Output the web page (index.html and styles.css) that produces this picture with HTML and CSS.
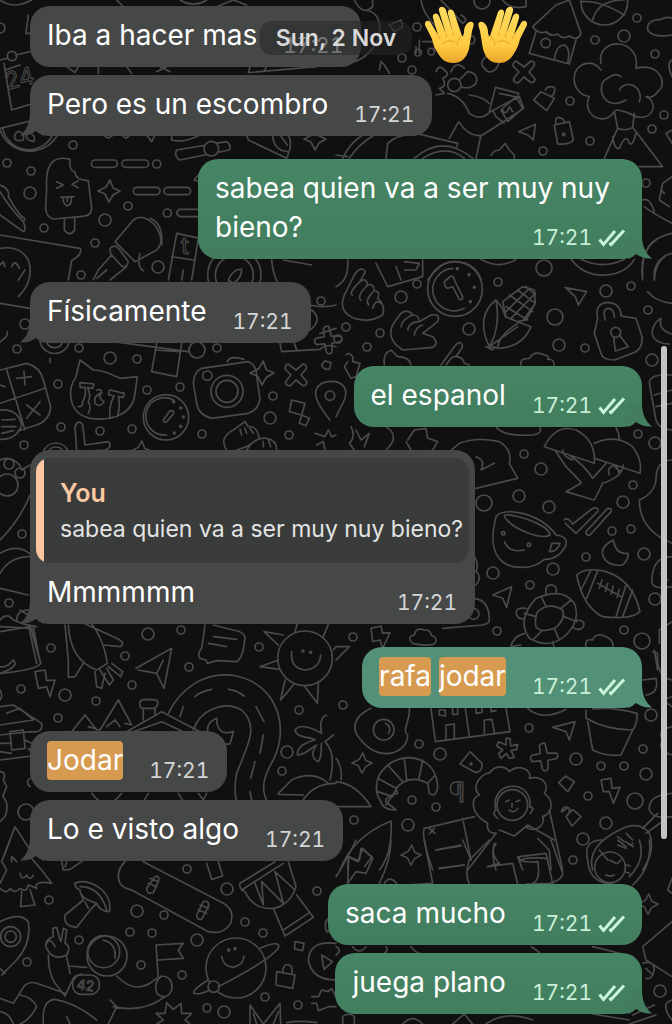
FILE: index.html
```html
<!DOCTYPE html>
<html lang="es">
<head>
  <meta charset="UTF-8" />
  <meta name="viewport" content="width=device-width, initial-scale=1.0" />
  <title>Chat</title>
  <link rel="stylesheet" href="styles.css">
</head>
<body>
  <svg width="0" height="0" class="defs" aria-hidden="true">
    <symbol id="tail-in" viewBox="0 0 24 24"><path d="M24 0H10C10 10 7 18 0 23.5C7 24 12 22 16 19Q20 23 24 24Z"/></symbol>
    <symbol id="tail-out" viewBox="0 0 24 24"><path d="M0 0H14C14 10 17 18 24 23.5C17 24 12 22 8 19Q4 23 0 24Z"/></symbol>
    <symbol id="checks" viewBox="0 0 28 18"><path d="M1.5 10.5L5.5 15.5L17 2M11.5 14L13 15.5L26 1.5"/></symbol>
    <symbol id="star" viewBox="-12 -12 24 24" overflow="visible"><path d="M1-11L4-3L11 0L4 4L0 11L-4 3L-11 0L-3-4Z"/></symbol>
    <symbol id="cross" viewBox="-12 -12 24 24" overflow="visible"><path d="M-8-11L0-5L7-11Q12-10 10-6L5 0L11 7Q10 12 6 10L0 5L-6 11Q-12 10-10 6L-5 0L-11-6Q-11-10-8-11Z"/></symbol>
    <symbol id="hand" viewBox="0 0 50 58">
      <path fill="url(#skin)" d="M14 49C10 43 8 38 7 33L0 19C-1 15 4 13 6 17L13 29L8 12C7 7 12 6 14 10L21 28L14 5C13 0 19-1 21 4L28 27L23 8C22 3 27 2 29 6L37 30C38 31 39 28 39 26C39 20 43 15 47 16C50 17 48 21 47 25L44 43C41 53 36 57 28 57C22 57 17 54 14 49Z"/>
      <path fill="none" stroke="#e4a52d" stroke-width="1" d="M13 29L15 33M21 28L22 31M28 27L29 30M37 30Q32 33 32 40M17 38Q24 33 30 36"/>
    </symbol>
    <linearGradient id="skin" x2="0" y2="1">
      <stop offset="0" stop-color="#ffdc62"/>
      <stop offset=".7" stop-color="#ffca3f"/>
      <stop offset="1" stop-color="#eaa52c"/>
    </linearGradient>
  </svg>

  <div class="chat">
    <svg class="wallpaper" viewBox="0 0 672 1024" preserveAspectRatio="xMidYMin slice" aria-hidden="true">
      <g id="rings"></g>

      <!-- sparkles and crosses -->
      <use href="#star" x="97" y="179" width="24" height="24"/>
      <use href="#star" x="249" y="359" width="26" height="28"/>
      <use href="#star" x="303" y="127" width="24" height="24"/>
      <use href="#star" x="351" y="752" width="22" height="22"/>
      <use href="#star" x="400" y="844" width="22" height="22"/>
      <use href="#star" x="637" y="893" width="22" height="22"/>
      <use href="#star" x="130" y="440" width="22" height="22"/>
      <use href="#cross" x="512" y="60" width="24" height="24"/>
      <use href="#cross" x="284" y="363" width="24" height="24"/>
      <g transform="translate(544 757) rotate(40)"><use href="#cross" x="-12" y="-12" width="24" height="24"/></g>
      <g transform="translate(328 340) rotate(40)"><use href="#cross" x="-12" y="-12" width="24" height="24"/></g>

      <!-- calendar, citrus, ice cream, pen -->
      <g class="wide">
        <path d="M0 0Q40 30 95 0M85 45L78 100H95M0 180L25 174M48 165L90 155M12 190L35 330L100 310M15 210L60 195M0 385L165 345M0 390A95 95 0 0 0 175 400M8 385A80 80 0 0 0 160 400M45 405C50 385 75 395 70 420C50 425 40 420 45 405M80 405C95 390 110 415 100 425C80 420 78 415 80 405"/>
        <circle cx="36" cy="168" r="14"/>
        <path d="M200 200L225 218L235 200M295 200V220M350 0L370 20M380 200L395 220M470 215L500 200M480 200L510 215M750 200L745 218L950 200M790 215L800 200M310 405L325 415L340 405M365 405L378 415L390 405M440 405L455 425L465 405M515 405V420Q550 430 600 405M540 0Q580 25 620 0M650 20L700 0L740 15"/>
        <path d="M530 450L680 425Q695 435 688 450L540 480Q520 470 530 450M740 405L745 420L860 475Q880 430 865 405M818 405Q820 450 862 455M840 405L862 435"/>
        <circle cx="634" cy="446" r="22" fill="#101010"/>
        <path d="M140 560C135 470 180 470 210 478Q205 510 225 517Q225 540 265 542L275 625Q275 650 240 650L160 657Q138 650 137 625ZM193 657V690Q210 712 224 690V654M170 545L190 555L170 565M235 542L216 553L235 563M182 592L222 590M190 592V605Q203 630 214 605V591M202 594V605"/>
        <rect x="274" y="480" width="78" height="22" rx="11"/><rect x="366" y="480" width="80" height="22" rx="11"/><circle cx="470" cy="492" r="12"/>
        <rect x="400" y="562" width="80" height="22" rx="11"/><rect x="492" y="562" width="80" height="22" rx="11"/><path d="M600 628H540Q520 638 540 650H600M600 520L582 540L600 545"/><circle cx="502" cy="639" r="12"/>
        <path d="M0 555Q30 565 25 590Q40 620 65 650Q80 655 70 665Q80 690 70 695L0 645M0 575Q30 625 70 665M0 705L240 745Q250 760 215 782L205 840M0 745Q60 735 85 780Q105 840 55 890M0 795L10 785L15 800M35 800Q45 775 58 805M55 840L75 810"/>
        <path d="M345 725L400 660Q425 640 460 670Q500 720 470 750L405 785ZM450 655Q490 670 485 735M330 745Q345 730 358 748L385 785Q380 805 365 798L332 762ZM335 765L295 810L280 840M380 800L330 840M290 835L320 810M420 760Q410 800 430 812"/>
        <path d="M530 700L600 715M530 700L505 840M515 770L580 780M595 715L575 840M545 840L550 810"/>
        <circle cx="703" cy="825" r="80"/><circle cx="703" cy="825" r="57"/><path d="M685 840Q700 805 725 808Q725 835 700 850ZM815 780Q820 850 870 900Q960 930 1008 915M850 780L935 795"/>
      </g>
      <text x="7" y="90" class="num" transform="rotate(-14 7 90)">24</text>
      <text x="181" y="254" class="num">t</text>

      <!-- shop, tree, candle, volcano -->
      <g class="wide" transform="translate(336 0)">
        <path d="M255 0Q260 40 300 80M315 0L380 70Q400 60 375 45M55 0Q80 50 110 20V0M0 190Q90 200 130 110Q140 30 80 30M160 75L195 60L200 80L175 95ZM130 210L135 185Q145 190 160 220M240 160V140M250 120V160M260 125H295V155"/>
        <circle cx="246" cy="158" r="10"/><circle cx="286" cy="155" r="10"/>
        <path d="M590 80L660 15L700 0L735 100Q725 125 700 108Q680 120 665 102Q645 112 630 95Q610 105 590 80M600 95L580 160L700 192L720 120M655 180Q660 135 685 135Q705 145 695 190"/><circle cx="629" cy="129" r="14"/>
        <circle cx="805" cy="5" r="70"/><path d="M740 5Q790 0 865 45M770 60Q785 0 865 0M1008 55Q995 48 975 58Q930 60 935 90Q950 115 1008 105M1008 180Q990 190 1008 230M1008 390L990 400L1008 430"/>
        <path d="M795 190C780 110 915 110 900 205C965 185 1000 250 965 275C950 300 920 290 935 290C970 320 945 360 900 350Q870 335 865 335Q840 325 835 335C800 385 735 340 760 290C700 280 700 195 755 190Q775 185 795 210M870 300C800 340 775 250 815 235Q840 215 855 230M850 270C870 235 925 260 910 305M835 335L845 385Q870 395 890 382L895 340M845 385L805 475M890 382L980 500L910 500M830 410Q835 450 850 445Q870 395 880 430Q890 440 900 400"/>
        <path d="M440 200Q430 175 465 165L490 185Q480 220 455 215ZM500 0Q520 30 570 20V0"/>
        <path d="M345 215Q360 180 385 205M300 215Q310 190 325 210Q345 225 320 235Q335 260 310 265L325 280L300 285M370 240L395 215Q430 220 420 250Q400 270 375 260M335 280Q380 290 400 340Q430 360 450 345Q470 330 550 290L563 325L440 405Q400 415 368 365L340 415M400 285Q440 290 460 310M460 335L478 262L548 280L545 292L490 280M470 330L480 350L505 370M495 330L540 290L560 325L515 365ZM500 330Q510 350 520 320L530 335M435 405L420 475"/><circle cx="355" cy="255" r="20"/>
        <path d="M593 300L615 275L655 295L632 332ZM628 270Q635 255 655 262Q660 280 645 290M655 375L700 365L712 420Q700 435 665 432ZM660 372Q655 345 675 355Q688 360 685 370M548 395L598 373L592 420L575 405Z"/><circle cx="683" cy="403" r="4"/>
        <path d="M465 465Q475 450 490 450L508 430L520 450L535 465L535 475M240 400L365 430L362 440M150 475L155 430Q180 405 240 400M235 475Q320 400 410 475M260 475Q330 430 385 475M20 475Q40 430 80 405M40 475Q70 430 115 405M0 465L35 470"/>
        <path d="M920 600Q940 590 955 635M925 620Q950 640 1008 670M1008 530L980 550L970 600L1000 620M975 570L985 580"/>
        <path d="M920 840Q905 720 1008 700M955 840Q960 770 1008 760"/>
        <path d="M705 778Q745 830 810 825Q870 820 895 778M735 778Q800 810 865 778M120 790L155 860L260 830V780M180 800L195 840M205 785L250 790L240 810H205M275 840Q320 780 360 785Q420 790 435 840M0 860Q40 840 35 780M435 778Q490 810 540 778"/>
      </g>

      <!-- cat, stopwatch, camera, pin -->
      <g class="wide" transform="translate(0 270)">
        <path d="M0 100L90 115M0 215Q25 200 22 185M120 215A45 45 0 0 0 208 215M140 215A25 25 0 0 0 188 215M150 265V278M340 215L565 245M470 220L455 305L530 320L545 220M465 240L540 245M935 120Q970 150 930 180M840 220L845 245L960 238Q980 220 1008 230M880 210L890 240M1008 175L960 190"/>
        <path d="M240 270L228 320C200 360 205 430 270 445C340 455 400 430 405 370L412 320L360 325Q310 300 280 300ZM242 338L282 342L278 355L262 353Q275 375 265 395Q275 410 265 430M240 338V352L255 352Q260 375 248 395Q250 410 235 410M330 360L373 370L370 382L355 380Q362 405 352 440M328 360L326 374L342 378Q325 410 330 445M290 360Q305 355 305 368Q290 380 312 395Q300 415 285 400Q280 380 300 370"/>
        <circle cx="498" cy="442" r="68"/><path d="M520 390A56 56 0 1 0 500 495M490 450L510 422Q525 420 520 432L500 455Q490 460 490 450"/><circle cx="521" cy="395" r="3"/><circle cx="542" cy="414" r="3"/><circle cx="550" cy="441" r="3"/><circle cx="542" cy="469" r="3"/><circle cx="523" cy="489" r="3"/>
        <path d="M605 295L745 275Q770 285 770 320L780 385Q775 420 745 430L635 445Q595 435 590 400L580 340Q582 305 605 295M682 275Q690 255 732 268"/><circle cx="681" cy="364" r="48"/><circle cx="681" cy="364" r="33"/><circle cx="622" cy="317" r="14"/>
        <path d="M0 300L80 280Q120 290 130 330L152 410Q150 450 110 465L55 482M20 300L75 480M0 400L135 355M50 325L95 320M72 303L75 345M80 405L120 435M120 395L80 445M0 345L15 350M0 420Q55 415 65 465Q50 510 0 508M5 450L45 448M5 470H48M5 490L40 482"/>
        <path d="M130 545A40 40 0 0 1 205 545M145 545A25 25 0 0 1 190 545M225 470Q235 445 248 465L255 525L325 515Q340 530 315 540L230 545Z"/>
        <path d="M680 540Q655 505 700 480L735 455L745 470Q770 465 778 505L740 530L710 540M740 540Q765 500 800 505Q830 510 830 540M735 475L740 490M720 478L725 495M750 475L760 490M790 515V530M805 510L812 530"/>
        <path d="M990 450Q940 390 948 360Q960 330 1008 335M965 285L975 272L993 278L988 298Q970 300 965 285M875 390L915 400L905 435L868 425ZM905 435L928 445L918 467L898 460ZM945 490L975 500L985 480L995 500L1008 495M950 525L970 515L975 540"/><circle cx="990" cy="377" r="14"/>
      </g>

      <!-- hands, coin, corn, lock -->
      <g class="wide" transform="translate(336 240)">
        <path d="M25 165L55 105Q75 75 88 95L72 125Q90 110 95 135Q115 130 115 152Q135 155 125 175Q150 195 140 225Q100 250 55 235Q5 215 25 165M72 125Q35 160 50 165M95 135Q60 170 75 180M115 152Q85 180 98 195M110 205Q120 175 135 190"/>
        <path d="M195 220Q215 205 230 225Q250 225 250 245L285 225Q315 220 305 245L260 280L290 290Q310 310 290 322L200 330Q140 290 180 240ZM230 225Q200 235 195 260M250 245Q220 245 215 270M260 255Q240 260 235 285"/>
        <path d="M315 375L355 320Q375 295 380 320L360 350Q380 350 385 370L400 375M330 375Q350 345 360 350M30 345Q40 335 50 350V365L72 370L60 410L45 415L25 380L35 365M145 375Q140 340 165 330L185 350Q220 350 225 375"/>
        <circle cx="357" cy="147" r="82"/><path d="M350 85A64 64 0 1 0 385 205M325 125L345 108Q355 110 355 120L380 170Q380 182 370 178L350 140L335 145Q325 140 325 125"/><circle cx="364" cy="86" r="3"/><circle cx="399" cy="104" r="3"/><circle cx="415" cy="142" r="3"/><circle cx="403" cy="185" r="3"/>
        <path d="M460 320C430 260 440 210 480 180Q500 200 508 230L545 245L585 260Q560 320 490 325ZM460 320Q495 260 480 180M460 320L545 260M450 320L470 330L475 320M485 320Q490 285 545 250M500 185L560 140L595 150L598 190L570 240L545 245M500 185L510 230M520 165L590 215M545 150L598 190M510 200L575 240M570 140L598 165M510 215L580 145M525 235L598 160M560 242L598 190"/>
        <path d="M688 143L752 155L727 195L718 170ZM775 280L785 235Q775 190 815 187Q855 190 855 228L900 235L918 290Q920 330 890 340L835 360Q800 360 795 340ZM808 240Q798 205 818 205Q835 208 835 232M833 292L838 333L877 320L850 285"/><circle cx="839" cy="277" r="15"/>
        <path d="M975 235Q950 250 948 280Q955 310 1000 312M975 235Q965 270 1008 282M920 110Q915 30 960 0M955 120Q950 70 985 50M935 155Q960 185 1008 190M555 375Q550 355 580 355Q595 330 625 345Q640 345 635 358Q655 355 655 378"/>
        <path d="M1008 405Q940 400 940 430L960 540Q970 570 1008 570M955 465L1008 450M960 500L1008 490"/>
        <path d="M0 425Q50 440 15 500L0 530M45 560Q60 590 40 610L55 630M60 570L75 600L100 580L85 620M150 560Q195 590 150 630M215 600L235 570L270 565L275 595L305 605L290 630M225 630L210 605M480 560Q500 590 590 585Q620 580 612 562M840 562Q850 580 850 600"/>
      </g>

      <!-- paw, bun, van -->
      <g class="wide" transform="translate(0 440)">
        <path d="M0 60Q20 50 40 60Q60 70 65 90L90 75M90 165Q60 240 0 300M0 340Q50 310 88 340M0 400Q30 350 88 350M0 445L85 465M0 540Q20 515 40 540L70 552L110 560M50 540Q50 510 85 510M60 510L85 525M0 575L90 560L120 660M100 560L115 640"/>
      </g>

      <!-- mushroom, cup, ball, turtle -->
      <g class="wide" transform="translate(336 440)">
        <path d="M340 35L370 10Q420-10 490 5Q530 30 520 70L545 115L420 145M420 50Q450 60 435 90L475 70M625 20Q660-50 720-30Q780 0 775 70ZM775 10Q840-20 890 20Q920 60 912 100L775 55M660 35L690 80Q740 130 735 130L690 155L775 180L800 130Q860 110 862 75M700 45Q750 80 770 115L810 70M680 30Q680 50 710 60M820 105Q810 80 840 75L850 100M835 80L855 95"/>
        <path d="M480 230C500 200 610 215 660 285Q700 290 688 320Q665 360 625 358Q590 390 530 380C460 360 465 290 480 230M505 230C500 210 640 250 642 285C620 300 530 270 505 230M640 335L648 310L672 310Q665 335 640 335M505 305Q520 340 565 330"/><circle cx="502" cy="280" r="5"/><circle cx="579" cy="314" r="5"/>
        <path d="M685 240Q695 230 710 252L770 205Q790 200 785 215L720 280L688 250M750 275L815 205Q830 205 825 215L762 285Q750 288 750 275M832 300Q790 320 802 350Q815 380 860 375Q880 355 876 340Q840 345 832 300M470 465L527 440L512 502L500 475Z"/>
        <path d="M722 405Q750 380 810 395Q890 420 912 515Q885 540 800 530Q740 500 722 405M765 390L735 450M785 392L752 475M870 435L840 530M890 450L860 530M785 430L855 470M798 420L790 445M815 430L808 455M832 438L825 462M850 448L843 472"/>
        <path d="M600 475Q680 440 715 490Q735 540 690 585Q640 630 580 595Q540 540 600 475M605 515Q640 485 680 510Q690 540 655 565Q615 580 600 560Q595 535 605 515M630 500L615 468M675 505L705 480M685 530L722 545M655 565L670 600M615 575L590 600M600 530L565 520M630 465Q625 430 650 435Q665 440 660 460M570 505Q535 500 542 525Q550 540 565 535M720 540Q750 540 742 560Q730 575 710 562M565 580Q530 590 525 620L555 615M650 605L655 625"/>
        <path d="M105 565L135 558L140 580L162 578L140 625L132 600L110 605ZM230 610Q210 590 235 585Q240 560 265 570Q285 570 285 585Q310 595 295 612Q270 620 230 610M750 620Q745 595 770 600Q780 575 810 590Q835 600 830 625M415 475Q460 480 460 540Q460 550 440 555L320 565M415 350Q430 370 420 395Q440 410 420 435M0 620H40L0 660"/><circle cx="413" cy="522" r="16"/>
        <path d="M1008 60Q960 60 960 120Q955 160 910 180Q910 250 970 290L1008 310M1008 350Q945 350 948 430Q960 450 1008 440M980 370L990 390M975 400L995 420M1008 545L970 570V610"/>
      </g>

      <!-- rocket, paper plane, road, house, sun -->
      <g class="wide" transform="translate(0 620)">
        <path d="M0 20L95 25L122 130Q110 150 0 160M85 15L110 130M0 140Q20 145 40 120Q60 140 0 160M105 155L135 150L140 182L165 180L150 230L140 200L115 205ZM195 15L205 120V172L225 170L250 130M205 15Q210 120 290 150L322 130Q310 50 265 0M230 0L350 55Q380 70 360 80L310 75M285 155L290 200L305 205L315 160M300 150L328 195L340 180L320 145M325 140L362 170L368 155L335 130M408 145L515 85L492 205L470 160L415 150M470 160L490 120"/>
        <path d="M615 15L605 85Q590 100 600 115L618 120L622 130L650 122L710 125Q730 115 735 50Q730 35 700 30L640 15M640 50L710 58M625 70L680 80"/>
        <circle cx="915" cy="115" r="82"/><path d="M875 95Q870 145 915 150Q960 145 962 105M835 75L792 35L850 45M835 120L780 140L838 148M855 180L842 240L880 195M915 200L952 250L955 185M885 35L895 0M970 50L990 0M1000 90L1008 80"/><circle cx="909" cy="93" r="3"/><circle cx="932" cy="97" r="3"/>
        <path d="M505 280C540 210 610 150 710 168C830 195 870 320 820 420C790 470 780 510 805 550M580 330C600 270 670 240 725 270C780 320 740 380 710 460Q700 510 710 545M585 230Q600 215 635 208M685 208Q710 210 732 228M768 260L792 305M790 345L780 400M765 425L752 475M750 515L755 540M550 260L540 290"/>
        <path d="M650 295Q615 310 625 340Q640 375 690 372L700 335Q650 350 650 295M380 335L485 275L600 335M400 335L485 305L550 335M430 270V300M465 265V285M420 255Q415 238 440 238L470 240Q480 255 462 265H430Q420 265 420 255"/>
        <path d="M215 335L255 285L290 330M265 320L300 330L355 240L395 315L375 310M320 320L345 300L360 320M0 260L40 255L125 310Q130 340 95 335L0 345M20 280L60 265L100 300L0 315M30 335L70 330L75 385L35 390ZM0 370H30M75 360L105 375M0 395L35 400M85 385Q110 410 80 410L0 420M0 210Q10 225 0 240M0 455Q20 455 10 480L20 500L8 530Q30 550 15 590L0 605M90 475Q75 485 90 500M15 700L45 620L90 690"/>
        <path d="M980 285C960 290 960 320 965 340C930 320 900 310 885 330C890 355 930 350 945 360C920 365 890 380 892 405C915 405 930 385 950 375C930 400 940 420 955 425C970 400 960 380 965 370M1000 345L975 365Q1010 400 990 480M835 520L875 480Q940 450 985 490M835 523L910 525M910 540Q940 490 1008 490"/>
        <path d="M275 520Q320 580 365 520M430 545L445 520M535 520L550 545M595 520L610 540L620 520"/>
      </g>

      <!-- egg, windows, croissant, girl, pot -->
      <g class="wide" transform="translate(336 620)">
        <path d="M105 265C50 290 45 330 75 360C130 430 215 400 215 345C195 330 225 300 220 265M285 265L298 365L522 335L510 265M388 265L400 348M330 360V315L355 312V355M445 340V300L468 298L475 338M310 285V270H328V288ZM350 265V283H365V265M420 265V280L438 277V265M465 265V275L480 272"/><circle cx="143" cy="329" r="31"/><path d="M148 310Q168 320 158 340"/>
        <path d="M650 322L717 305L700 360L690 335ZM750 270V295Q810 330 890 330Q905 310 903 280Q830 260 770 267M755 305L770 390Q810 410 855 405L890 330M510 375V355L522 355L524 378L545 373L542 388L525 392L535 412L520 415L511 400L495 415L488 400L500 390L482 378L488 365ZM402 395L438 430Q440 455 420 458L372 432ZM668 488L688 468L715 485L695 515ZM795 480L825 475L828 505L852 502L832 550L820 515L802 515Z"/><circle cx="405" cy="432" r="3"/>
        <path d="M180 570Q140 570 135 545Q110 510 130 465Q160 415 220 413Q300 420 305 500Q300 535 280 520L275 490Q220 460 180 505L185 520Q145 530 150 545L180 570M125 475L180 505M155 435L200 485M205 415L212 480M260 420L248 480M298 465L275 490M125 515L170 530M180 510L150 555"/>
        <text x="339" y="545" class="pilcrow">¶</text>
        <path d="M455 610C400 580 405 530 430 525C400 495 445 455 460 460C480 430 510 440 520 455C550 430 590 450 580 475C625 465 640 500 625 520C655 540 650 580 620 590C630 620 590 640 570 620M455 610Q450 640 480 640"/><circle cx="529" cy="555" r="46"/><path d="M478 565C465 480 590 475 582 560M510 545L520 540M540 545L552 540M528 550V562M520 570Q535 582 545 565M480 570Q465 580 485 595M580 560Q600 565 582 580M490 630L535 648L575 615L655 660M480 640L395 750M475 670Q465 700 480 750M640 570L680 750M605 655L640 690L645 750M265 625L415 590M265 625Q255 650 290 750M380 595L405 720M300 690L375 678M310 745L385 735M280 625L297 640M280 642L295 625M545 710L560 750M550 725Q560 710 635 715"/>
        <path d="M12 750Q50 650 165 603Q170 700 130 750M35 750L38 710L70 722L75 685L108 710L85 740M680 575L695 562M690 590L710 568L735 590L708 618ZM676 575Q685 552 700 565V580M0 485Q60 490 105 560H0M0 415Q20 440 15 480"/>
        <path d="M770 750Q750 680 850 630Q910 600 940 640Q960 690 920 750M920 625L965 580M930 640L985 600M1008 520Q935 525 940 570Q955 600 1008 590M845 650L865 665M870 640L890 660M845 675L870 685M875 670L892 680M950 95L965 100Q960 170 1008 180M955 90L965 150M920 180L960 175Q970 220 930 225M1008 230L980 240L1008 260M575 265Q620 305 690 268M1008 320Q960 330 980 360Q960 390 1008 405"/>
      </g>

      <!-- tree, mushroom, skateboard, drum, astronaut, planet -->
      <g class="wide" transform="translate(0 840)">
        <path d="M30 0L5 65L20 90L0 130M0 145Q20 165 30 145Q45 165 60 145Q80 160 85 135L110 145Q100 120 155 130L125 90L90 50M35 65V50L50 65M60 100Q65 125 80 105Q90 125 100 105M65 155L62 200L105 195L90 150M185 65L190 90L210 88L245 65M200 65L195 80"/>
        <path d="M225 130C260 110 340 150 328 215Q300 215 290 190Q240 175 240 150Q225 145 225 130M240 155L250 180L195 225Q190 260 230 262L275 205L290 190M240 140Q300 140 320 210M255 185L265 205"/>
        <path d="M375 65Q345 95 360 130Q370 145 395 150L625 275Q670 285 692 250Q705 210 670 190L430 65M440 145L465 110Q480 105 475 125L460 158Q440 165 440 145M590 225L610 185Q630 180 625 200L605 238Q590 240 590 225M445 130L470 140M450 115L475 125M595 210L620 220M600 195L625 205"/>
        <path d="M620 70L635 118L668 108L655 65M720 130L825 65M725 150L850 70M720 130Q715 145 735 155Q760 210 820 205Q870 195 888 140L865 65M765 130L790 195L785 125L850 190L825 95L885 150M820 205L855 288L940 232L890 165M850 270L925 220"/>
        <path d="M0 245Q60 215 85 245Q95 310 50 360L5 405M0 385L15 400"/><circle cx="32" cy="290" r="30"/><circle cx="32" cy="290" r="17"/>
        <circle cx="321" cy="348" r="60"/><circle cx="311" cy="335" r="48"/><path d="M310 300Q350 310 345 355M160 290L158 265L170 262L180 300M183 305L190 265L200 270L195 310Q215 320 200 345Q160 365 140 325Q130 300 160 290M140 310Q150 290 165 320M145 345Q145 400 165 430L195 468L215 425Q220 405 245 402M200 350L210 400M205 378L260 382M350 408Q400 460 450 430L470 415M495 470Q430 520 340 500M195 460L110 430Q80 420 65 450L40 490L0 475M60 465Q95 470 110 500M110 500Q90 540 60 552M0 515Q30 520 40 552M130 552Q125 480 165 478Q230 490 290 540M330 480L350 500L325 552M200 530L210 552"/>
        <rect x="218" y="405" width="80" height="58" rx="26"/>
        <path d="M468 315L475 415M468 315L550 310L535 330L550 355L475 360M485 408Q520 410 515 450Q500 485 470 460Q460 425 485 408"/>
        <circle cx="708" cy="384" r="90"/><circle cx="641" cy="440" r="17" fill="#101010"/><path d="M665 350Q670 380 700 382Q730 375 732 348M780 325Q835 300 837 320Q820 355 655 440M625 420Q575 450 582 460Q595 465 625 452"/><circle cx="686" cy="330" r="3"/><circle cx="705" cy="326" r="3"/>
        <path d="M470 552L490 540L468 520L495 520L500 488L520 508L543 490L545 520L575 520L555 540L570 552M750 552V495L790 552L840 490L842 552M770 552L760 520M820 552L835 515M830 395L885 405L878 445L828 435ZM848 395Q850 370 868 375Q880 380 875 402M885 305L912 310L908 332L884 327ZM1008 310Q930 300 925 360Q935 420 1008 420M965 345L998 365L972 388ZM935 470L955 470L965 450L985 455L995 445L1008 470M935 490L950 490L955 512L985 500H1008M860 548Q900 540 950 548M1008 220L985 235Q970 250 980 275L1008 270"/>
      </g>
      <text x="76" y="989" class="num small" transform="rotate(8 76 989)">42</text>

      <g class="wide" transform="translate(336 840)">
        <path d="M0 110Q30 65 60 0M35 130L38 50L65 65L80 25L110 55L90 100L60 95ZM130 130Q165 60 165 0M145 130Q160 105 182 130M265 0L290 130M300 30L375 15M310 85L385 75M210 135L290 130M380 0L405 60M460 0L400 60Q385 100 400 132M480 10Q460 40 490 70L455 80L530 70L545 132M550 50L630 40L650 130M550 50Q545 70 605 65Q615 120 590 130M645 0L680 100Q680 120 640 130L570 132M845 0L870 20M870 5Q885 20 890 10M755 60Q740 0 800 0M755 60Q760 130 830 132M940 0Q950 80 890 135M910 0Q930 60 880 110M790 30L815 60M820 60L840 70M855 60L845 70M810 105Q820 112 835 105M870 75L882 78M865 95L880 100"/><circle cx="822" cy="82" r="46"/>
        <path d="M1008 245L920 320L930 360L1008 410M920 370Q950 360 955 385Q950 420 930 415M930 385L945 400M1008 480Q970 490 1008 540M1008 115L995 150L1008 160M50 320Q70 345 90 320M150 320Q160 330 140 345M225 320Q240 345 270 342M585 320Q620 340 610 345M770 320L860 342M0 345Q20 330 0 320M20 552V530Q40 515 55 530V552M200 552Q230 520 260 552M350 552L385 522L410 552M450 552Q510 510 590 540M770 522L880 540M890 525L955 495M880 552L960 525"/>
      </g>
    </svg>

    <main class="messages">
      <div class="group">
        <div class="line">
          <div class="bubble in">
            <p class="text">Iba a hacer mas</p>
            <time class="meta">17:21</time>
          </div>
          <div class="hands" role="img" aria-label="manos abiertas">
            <svg viewBox="0 0 50 58"><use href="#hand"/></svg>
            <svg viewBox="0 0 50 58" class="flip"><use href="#hand"/></svg>
          </div>
        </div>
        <div class="bubble in">
          <p class="text">Pero es un escombro</p>
          <time class="meta">17:21</time>
          <svg class="tail"><use href="#tail-in"/></svg>
        </div>
      </div>

      <div class="group">
        <div class="bubble out long">
          <p class="text">sabea quien va a ser muy nuy bieno?</p>
          <span class="meta"><time>17:21</time><svg class="checks"><use href="#checks"/></svg></span>
          <svg class="tail"><use href="#tail-out"/></svg>
        </div>
      </div>

      <div class="group">
        <div class="bubble in">
          <p class="text">Físicamente</p>
          <time class="meta">17:21</time>
          <svg class="tail"><use href="#tail-in"/></svg>
        </div>
      </div>

      <div class="group">
        <div class="bubble out">
          <p class="text">el espanol</p>
          <span class="meta"><time>17:21</time><svg class="checks"><use href="#checks"/></svg></span>
          <svg class="tail"><use href="#tail-out"/></svg>
        </div>
      </div>

      <div class="group">
        <div class="bubble in reply">
          <blockquote class="quote">
            <p class="quote-name">You</p>
            <p class="quote-text">sabea quien va a ser muy nuy bieno?</p>
          </blockquote>
          <div class="reply-row">
            <p class="text">Mmmmmm</p>
            <time class="meta">17:21</time>
          </div>
          <svg class="tail"><use href="#tail-in"/></svg>
        </div>
      </div>

      <div class="group">
        <div class="bubble out found">
          <p class="text"><mark>rafa</mark> <mark>jodar</mark></p>
          <span class="meta"><time>17:21</time><svg class="checks"><use href="#checks"/></svg></span>
          <svg class="tail"><use href="#tail-out"/></svg>
        </div>
      </div>

      <div class="group">
        <div class="bubble in">
          <p class="text"><mark>Jodar</mark></p>
          <time class="meta">17:21</time>
        </div>
        <div class="bubble in">
          <p class="text">Lo e visto algo</p>
          <time class="meta">17:21</time>
          <svg class="tail"><use href="#tail-in"/></svg>
        </div>
      </div>

      <div class="group">
        <div class="bubble out">
          <p class="text">saca mucho</p>
          <span class="meta"><time>17:21</time><svg class="checks"><use href="#checks"/></svg></span>
        </div>
        <div class="bubble out">
          <p class="text">juega plano</p>
          <span class="meta"><time>17:21</time><svg class="checks"><use href="#checks"/></svg></span>
          <svg class="tail"><use href="#tail-out"/></svg>
        </div>
      </div>
    </main>

    <div class="date">Sun, 2 Nov</div>
    <div class="scrollbar"></div>
  </div>

  <script src="wallpaper.js"></script>
</body>
</html>
```

FILE: styles.css
```css
* {
  box-sizing: border-box;
}
body {
  margin: 0;
  background: #101010;
  color: #fff;
  font-family: Inter, "Liberation Sans", sans-serif;
}
p, blockquote {
  margin: 0;
}
.defs {
  position: absolute;
}
.chat {
  position: relative;
  min-height: 100vh;
  overflow: hidden;
}
.wallpaper {
  position: absolute;
  top: 0;
  left: 0;
  width: 100%;
  height: 100%;
  fill: none;
  stroke: #4a4a4a;
  stroke-width: 1.7;
  stroke-linejoin: round;
  stroke-linecap: round;
}
/* doodles drawn on a grid three times finer than the page */
.wide path, .wide circle, .wide rect {
  transform: scale(0.33333);
  stroke-width: 5;
}
.num {
  font-size: 24px;
  stroke-width: 1;
}
.num.small {
  font-size: 14px;
}
.wide .pilcrow {
  transform: scale(0.33333);
  font-size: 80px;
  stroke-width: 4;
}
.messages {
  position: relative;
  display: flex;
  flex-direction: column;
  gap: 23px;
  padding: 6px 30px 10px;
}
.group {
  display: flex;
  flex-direction: column;
  align-items: flex-start;
  gap: 8px;
}
.line {
  display: flex;
  align-items: flex-start;
  gap: 64px;
}
.bubble {
  position: relative;
  display: flex;
  align-items: flex-end;
  gap: 26px;
  padding: 10px 18px 9px 17px;
  border-radius: 20px;
  background: #464747;
}
.bubble.out {
  align-self: flex-end;
  padding-right: 16px;
  background: linear-gradient(#468565, #417d5e);
}
.bubble.found {
  background: #529077;
}
.text {
  margin-bottom: 3px;
  font-size: 28px;
  line-height: 39px;
}
.meta {
  display: flex;
  align-items: center;
  gap: 6px;
  color: #d4d5d5;
  font-size: 21px;
  font-variant-numeric: tabular-nums;
  line-height: 24px;
}
.out .meta {
  color: #c9efd8;
}
.checks {
  width: 28px;
  height: 18px;
  fill: none;
  stroke: #c9f5da;
  stroke-width: 3;
}
.tail {
  position: absolute;
  left: -10px;
  bottom: 0;
  width: 24px;
  height: 24px;
  fill: #464747;
}
.out .tail {
  left: auto;
  right: -10px;
  fill: #417d5e;
}
.found .tail {
  fill: #529077;
}
.long {
  display: grid;
  max-width: 444px;
}
.long .text, .long .meta {
  grid-area: 1 / 1;
}
.long .meta {
  align-self: end;
  justify-self: end;
}
.reply {
  flex-direction: column;
  align-items: stretch;
  gap: 10px;
  padding: 8px 6px 9px;
}
.quote {
  position: relative;
  z-index: 1;
  padding: 17px 6px 16px 24px;
  border-radius: 14px;
  background: linear-gradient(to right, #fdc6a3 8px, #3a3c3b 8px);
}
.quote-name {
  color: #fdc9a4;
  font-size: 25px;
  font-weight: 600;
  line-height: 36px;
}
.quote-text {
  color: #e4e4e4;
  font-size: 23px;
  line-height: 36px;
}
.reply-row {
  position: relative;
  z-index: 1;
  display: flex;
  align-items: flex-end;
  justify-content: space-between;
  padding: 0 12px 0 11px;
}
mark {
  display: inline-block;
  border-radius: 4px;
  background: #d69b50;
  color: #fff;
}
.hands {
  display: flex;
  gap: 2px;
}
.hands svg {
  width: 50px;
  height: 58px;
}
.hands .flip {
  transform: scaleX(-1);
}
.date {
  position: absolute;
  top: 21px;
  left: 50%;
  padding: 0 16px;
  border-radius: 12px;
  background: rgba(38, 38, 38, 0.55);
  color: #d8d8d8;
  font-size: 23px;
  font-weight: 600;
  line-height: 34px;
  white-space: nowrap;
  transform: translateX(-50%);
}
.scrollbar {
  position: absolute;
  top: 346px;
  right: 5px;
  width: 6px;
  height: 493px;
  border-radius: 3px;
  background: #c4c4c4;
}
```

FILE: wallpaper.js
```js
// small circles scattered between the doodles: x, y, radius
const rings = [
  [0, 28, 5], [73, 145, 4], [7, 163, 4], [31, 171, 4], [30, 193, 6], [128, 206, 4], [105, 220, 6], [44, 228, 4],
  [95, 243, 4], [158, 267, 6], [81, 275, 4], [482, 1, 8], [402, 58, 4], [412, 70, 4], [471, 40, 4],
  [417, 27, 4], [637, 18, 4], [624, 36, 6], [595, 40, 4], [655, 54, 4], [570, 101, 4], [652, 129, 4], [664, 115, 4],
  [590, 141, 4], [543, 151, 4], [646, 183, 4], [544, 268, 8], [321, 301, 4], [25, 324, 5], [17, 349, 4], [79, 348, 4],
  [110, 358, 6], [137, 359, 4], [197, 350, 8], [217, 348, 4], [58, 384, 4], [147, 390, 4], [180, 387, 4], [61, 427, 4],
  [100, 431, 4], [132, 429, 4], [202, 434, 4], [273, 396, 4], [270, 418, 6], [289, 435, 4], [24, 445, 4], [417, 284, 4],
  [401, 297, 6], [346, 327, 4], [380, 333, 4], [367, 347, 4], [498, 282, 4], [469, 329, 6], [555, 317, 8], [606, 291, 6],
  [631, 286, 4], [648, 310, 4], [559, 345, 6], [585, 348, 4], [652, 360, 6], [638, 434, 4], [655, 443, 6], [338, 339, 4],
  [22, 534, 4], [9, 603, 4], [9, 464, 5], [20, 473, 5], [7, 485, 11], [51, 648, 4], [148, 634, 6], [181, 630, 4],
  [125, 656, 4], [259, 647, 4], [524, 454, 4], [541, 469, 6], [484, 503, 8], [519, 496, 6], [549, 507, 6], [633, 485, 4],
  [623, 502, 6], [612, 531, 4], [631, 529, 4], [644, 554, 6], [586, 557, 4], [493, 573, 6], [553, 569, 6], [530, 585, 4],
  [655, 599, 6], [353, 637, 4], [497, 631, 4], [624, 630, 4], [642, 641, 8], [21, 689, 4], [65, 695, 6], [96, 701, 4],
  [58, 718, 4], [132, 685, 4], [189, 667, 4], [299, 710, 4], [287, 752, 6], [282, 771, 4], [26, 812, 8], [343, 705, 4],
  [419, 744, 4], [440, 754, 6], [529, 728, 4], [643, 749, 4], [576, 759, 6], [601, 766, 4], [624, 766, 4], [646, 774, 6],
  [635, 801, 8], [588, 796, 4], [412, 800, 4], [436, 807, 4], [354, 820, 4], [408, 825, 6], [606, 823, 6], [583, 839, 6],
  [573, 860, 4], [651, 715, 6], [49, 900, 4], [137, 911, 6], [164, 915, 4], [187, 869, 4], [227, 889, 6], [317, 891, 4],
  [245, 922, 4], [263, 933, 4], [130, 932, 4], [152, 933, 4], [79, 940, 4], [197, 940, 6], [27, 962, 4], [141, 965, 4],
  [182, 975, 4], [265, 997, 4], [207, 1008, 4], [224, 1012, 6], [298, 1005, 4], [660, 991, 6]
];

const layer = document.getElementById('rings');
rings.forEach(([x, y, r]) => {
  const ring = document.createElementNS('http://www.w3.org/2000/svg', 'circle');
  ring.setAttribute('cx', x);
  ring.setAttribute('cy', y);
  ring.setAttribute('r', r);
  layer.appendChild(ring);
});
```
